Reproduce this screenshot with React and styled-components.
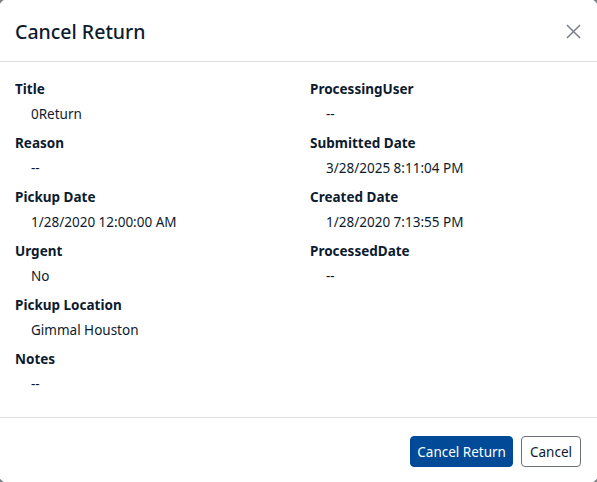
import React from 'react';
import styled, { createGlobalStyle } from 'styled-components';

const GlobalStyle = createGlobalStyle`
  html, body {
    margin: 0;
    padding: 0;
    background: #7d8288;
    overflow: hidden;
  }
  body {
    font-family: "Segoe UI", "Noto Sans", "Open Sans", sans-serif;
    color: #0d1b2e;
  }
`;

const Modal = styled.div`
  width: 599px;
  height: 484px;
  margin: -1px;
  background: #fff;
  border-radius: 9px;
  display: flex;
  flex-direction: column;
  overflow: hidden;
`;

const Header = styled.div`
  height: 63px;
  padding: 0 16px;
  display: flex;
  align-items: center;
  justify-content: space-between;
  border-bottom: 1px solid #dee0e5;
  box-sizing: border-box;
  flex-shrink: 0;
`;

const Title = styled.h1`
  margin: 0;
  padding-top: 2px;
  font-size: 19.5px;
  font-weight: 500;
  color: #0d1b2e;
`;

const CloseButton = styled.button`
  border: none;
  background: none;
  padding: 0;
  width: 18px;
  height: 18px;
  margin-top: 2px;
  color: #7a8089;
  display: flex;
  align-items: center;
  justify-content: center;
  cursor: pointer;
`;

const Body = styled.div`
  flex: 1;
  min-height: 0;
  padding: 17px 16px 0;
  display: grid;
  grid-template-columns: 295px 1fr;
  align-content: start;
`;

const Column = styled.div`
  display: flex;
  flex-direction: column;
`;

const Field = styled.div`
  margin-bottom: 8px;
`;

const Label = styled.div`
  font-size: 13.5px;
  font-weight: 700;
  line-height: 21px;
`;

const Value = styled.div`
  margin-top: 4px;
  padding-left: 16px;
  font-size: 13.5px;
  line-height: 21px;
`;

const Footer = styled.div`
  height: 66px;
  flex-shrink: 0;
  border-top: 1px solid #dee0e5;
  box-sizing: border-box;
  display: flex;
  align-items: center;
  justify-content: flex-end;
  gap: 8px;
  padding: 2px 17px 0;
`;

const Button = styled.button`
  height: 31px;
  padding: 0 ${p => (p.$primary ? '6px' : '8px')};
  border-radius: 4px;
  font-family: inherit;
  font-size: 13.5px;
  cursor: pointer;
  border: 1px solid ${p => (p.$primary ? '#004a98' : '#6b7079')};
  background: ${p => (p.$primary ? '#004a98' : '#fff')};
  color: ${p => (p.$primary ? '#fff' : '#0d1b2e')};
`;

const left = [
  ['Title', '0Return'],
  ['Reason', '--'],
  ['Pickup Date', '1/28/2020 12:00:00 AM'],
  ['Urgent', 'No'],
  ['Pickup Location', 'Gimmal Houston'],
  ['Notes', '--'],
];

const right = [
  ['ProcessingUser', '--'],
  ['Submitted Date', '3/28/2025 8:11:04 PM'],
  ['Created Date', '1/28/2020 7:13:55 PM'],
  ['ProcessedDate', '--'],
];

const renderFields = rows =>
  rows.map(([label, value]) => (
    <Field key={label}>
      <Label>{label}</Label>
      <Value>{value}</Value>
    </Field>
  ));

export default function App() {
  return (
    <>
      <GlobalStyle />
      <Modal>
        <Header>
          <Title>Cancel Return</Title>
          <CloseButton aria-label="Close">
            <svg width="15" height="15" viewBox="0 0 16 16">
              <path d="M1 1 L15 15 M15 1 L1 15" stroke="currentColor" strokeWidth="1.6" />
            </svg>
          </CloseButton>
        </Header>
        <Body>
          <Column>{renderFields(left)}</Column>
          <Column>{renderFields(right)}</Column>
        </Body>
        <Footer>
          <Button $primary>Cancel Return</Button>
          <Button>Cancel</Button>
        </Footer>
      </Modal>
    </>
  );
}
